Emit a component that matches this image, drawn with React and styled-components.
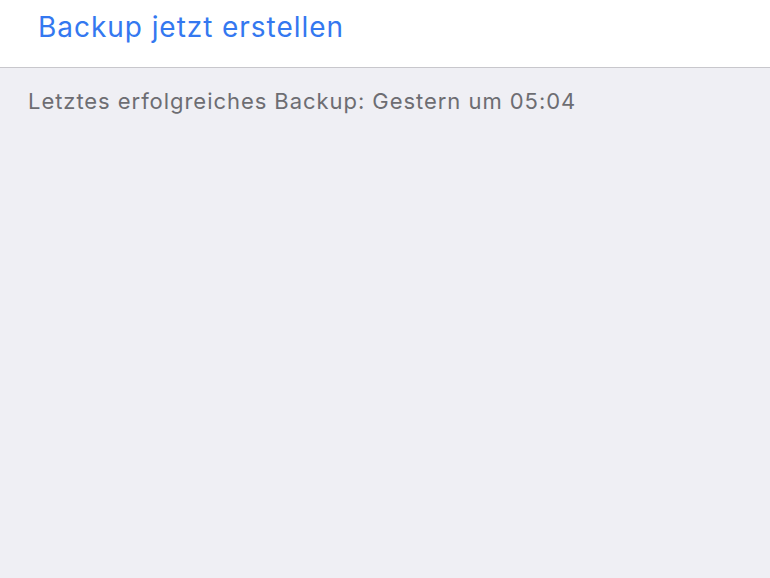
import styled, { createGlobalStyle } from "styled-components";

const GlobalStyle = createGlobalStyle`
  html, body {
    margin: 0;
    padding: 0;
    background: #efeff4;
  }
  body {
    font-family: Inter, "Liberation Sans", Arial, sans-serif;
    -webkit-font-smoothing: antialiased;
  }
`;

const Page = styled.div`
  width: 770px;
  height: 578px;
  background: #efeff4;
  overflow: hidden;
`;

// Action cell

const Cell = styled.div`
  display: flex;
  align-items: flex-start;
  height: 68px;
  padding: 10px 38px 0;
  background: #ffffff;
  border-bottom: 1px solid #c8c7cc;
  box-sizing: border-box;
`;

const ActionLink = styled.span`
  color: #3478f0;
  font-size: 28px;
  line-height: 34px;
  letter-spacing: 0.95px;
  cursor: pointer;
`;

// Footer note

const Footer = styled.p`
  margin: 0;
  padding: 20px 28px 0;
  color: #6d6d72;
  font-size: 22px;
  line-height: 26px;
  letter-spacing: 0.95px;
`;

export default function App() {
  return (
    <Page>
      <GlobalStyle />
      <Cell>
        <ActionLink>Backup jetzt erstellen</ActionLink>
      </Cell>
      <Footer>Letztes erfolgreiches Backup: Gestern um 05:04</Footer>
    </Page>
  );
}
